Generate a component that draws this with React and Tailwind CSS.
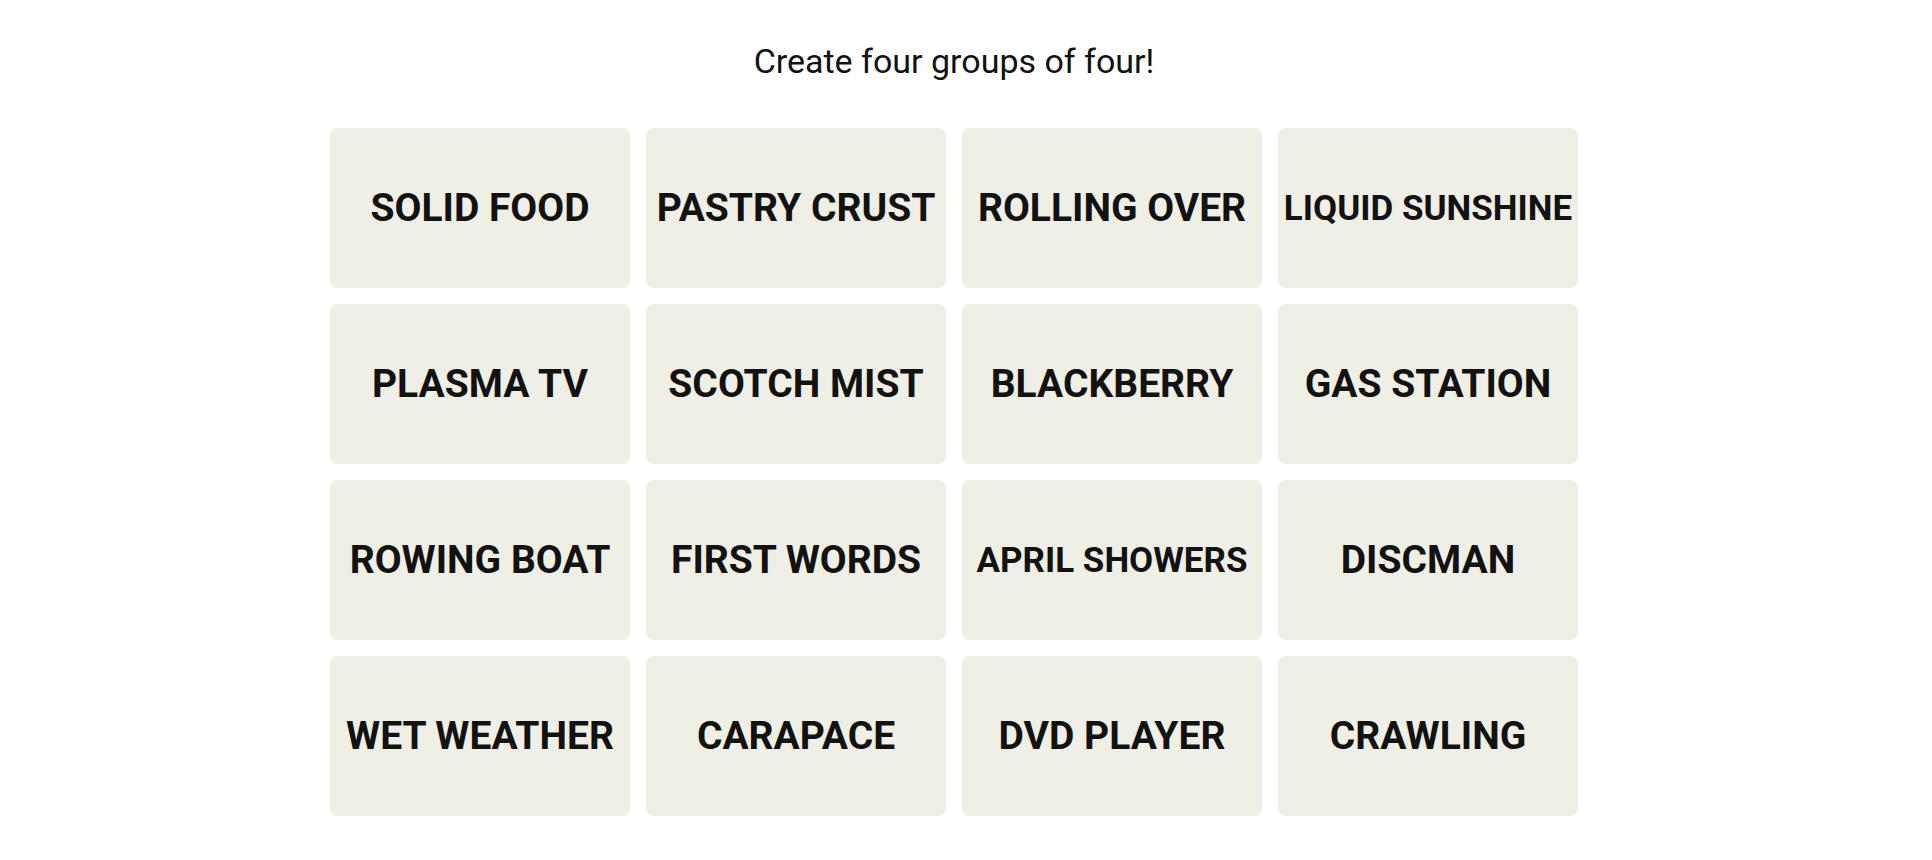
const words = [
  { text: 'SOLID FOOD' },
  { text: 'PASTRY CRUST' },
  { text: 'ROLLING OVER' },
  { text: 'LIQUID SUNSHINE', small: true },
  { text: 'PLASMA TV' },
  { text: 'SCOTCH MIST' },
  { text: 'BLACKBERRY' },
  { text: 'GAS STATION' },
  { text: 'ROWING BOAT' },
  { text: 'FIRST WORDS' },
  { text: 'APRIL SHOWERS', small: true },
  { text: 'DISCMAN' },
  { text: 'WET WEATHER' },
  { text: 'CARAPACE' },
  { text: 'DVD PLAYER' },
  { text: 'CRAWLING' },
];

export default function App() {
  return (
    <div
      className="min-h-screen bg-white pr-[24px] text-[#121212]"
      style={{ fontFamily: 'Roboto, "Liberation Sans", sans-serif' }}
    >
      <div className="flex flex-col items-center pt-[41px]">
        <h1 className="text-[34px] leading-[40px] font-normal">Create four groups of four!</h1>

        {/* GRID */}
        <div className="mt-[47px] grid grid-cols-[repeat(4,300px)] auto-rows-[160px] gap-4">
          {words.map((w) => (
            <div
              key={w.text}
              className="flex items-center justify-center rounded-lg bg-[#efefe6] select-none"
            >
              <span
                className={`font-bold uppercase leading-none whitespace-nowrap ${
                  w.small ? 'text-[35px]' : 'text-[39px]'
                }`}
              >
                {w.text}
              </span>
            </div>
          ))}
        </div>
      </div>
    </div>
  );
}
